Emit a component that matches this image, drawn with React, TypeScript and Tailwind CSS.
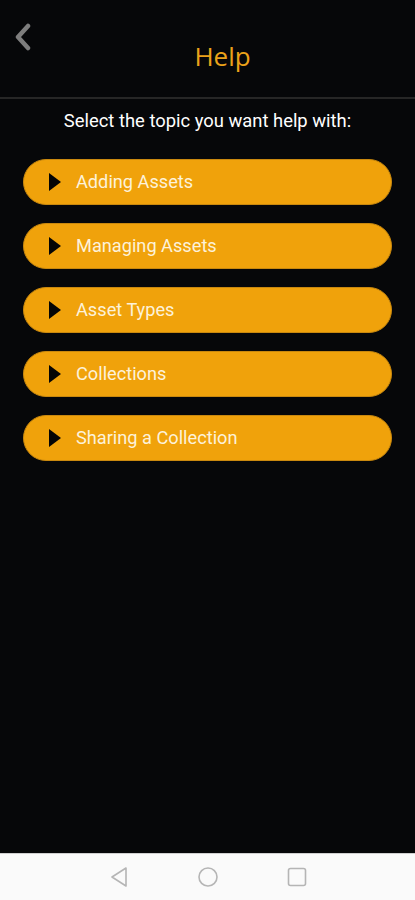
import React from "react";

const topics = ["Adding Assets", "Managing Assets", "Asset Types", "Collections", "Sharing a Collection"];

export default function App() {
  return (
    <div className="w-[415px] h-[900px] bg-[#060709] flex flex-col" style={{ fontFamily: "Roboto, 'Liberation Sans', sans-serif" }}>
      <div className="relative h-[97px] flex items-center justify-center">
        <svg className="absolute left-[13px] top-[23px]" width="20" height="28" viewBox="0 0 20 28">
          <path d="M15 3 L5 14 L15 25" fill="none" stroke="#7d7d7d" strokeWidth="4.5" strokeLinecap="round" strokeLinejoin="round" />
        </svg>
        <span className="text-[#eba21a] text-[26px] font-medium mt-[16px] ml-[30px]" style={{ fontFamily: "'Open Sans', 'Noto Sans', sans-serif" }}>Help</span>
      </div>
      <div className="h-[2px] bg-[#262626]" />
      <div className="flex-1 flex flex-col items-center">
        <p className="text-white text-[18.4px] mt-[9px] leading-[26px]">Select the topic you want help with:</p>
        <div className="flex flex-col gap-[18px] mt-[25px] w-[369px]">
          {topics.map((t) => (
            <div key={t} className="h-[46px] rounded-full bg-[#f0a20b] border border-[#c9880e] flex items-center pl-[24px]">
              <svg width="14" height="20" viewBox="0 0 14 20">
                <path d="M1 1 L13 10 L1 19 Z" fill="#050505" />
              </svg>
              <span className="ml-[14px] text-[#fdf2da] text-[18.2px]">{t}</span>
            </div>
          ))}
        </div>
      </div>
      <div className="h-[47px] bg-[#fafafa] border-t border-[#cfcfcf] flex items-center justify-center gap-[68px]">
        <svg width="20" height="22" viewBox="0 0 20 22">
          <path d="M17 2 L3 11 L17 20 Z" fill="none" stroke="#b5b5b5" strokeWidth="1.6" strokeLinejoin="round" />
        </svg>
        <svg width="22" height="22" viewBox="0 0 22 22">
          <circle cx="11" cy="11" r="9" fill="none" stroke="#b5b5b5" strokeWidth="1.6" />
        </svg>
        <svg width="20" height="20" viewBox="0 0 20 20">
          <rect x="1.5" y="1.5" width="17" height="17" rx="2" fill="none" stroke="#b5b5b5" strokeWidth="1.6" />
        </svg>
      </div>
    </div>
  );
}
